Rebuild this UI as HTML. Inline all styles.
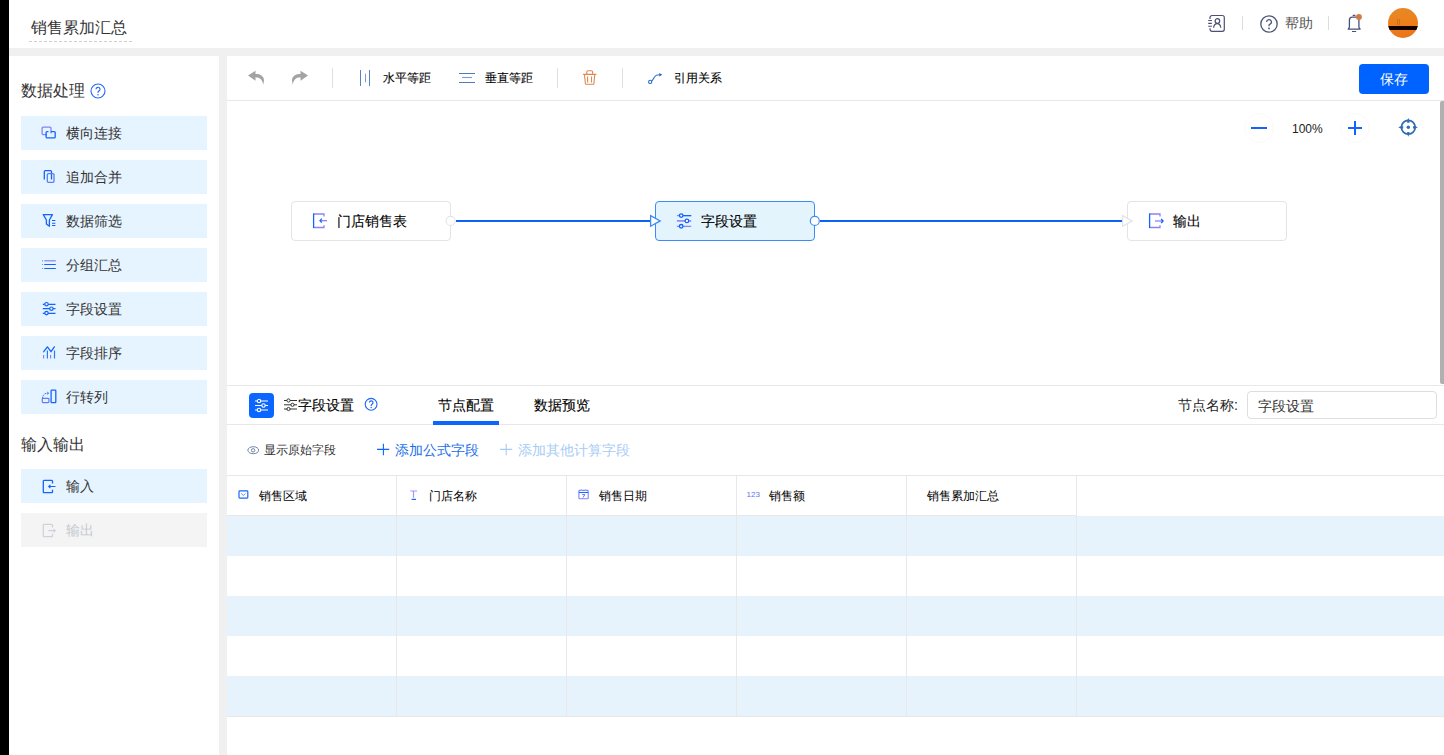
<!DOCTYPE html>
<html><head><meta charset="utf-8">
<style>
*{box-sizing:border-box;margin:0;padding:0}
html,body{width:1444px;height:755px;overflow:hidden;background:#f0f0f0;font-family:"Liberation Sans",sans-serif;color:#333}
.a{position:absolute}
.t{position:absolute;white-space:nowrap;line-height:1}
svg{position:absolute;overflow:visible}
</style></head><body>
<!-- black strip -->
<div class="a" style="left:0;top:0;width:9px;height:755px;background:#000"></div>
<!-- header -->
<div class="a" style="left:9px;top:0;width:1435px;height:48px;background:#fff"></div>
<div class="t" style="left:31px;top:20px;font-size:16px;color:#333">销售累加汇总</div>
<div class="a" style="left:29px;top:41px;width:104px;height:1px;background:repeating-linear-gradient(90deg,#d0d0d0 0 3px,transparent 3px 5px)"></div>

<!-- sidebar -->
<div class="a" style="left:9px;top:56px;width:210px;height:699px;background:#fff"></div>
<!-- main panel -->
<div class="a" style="left:227px;top:56px;width:1217px;height:699px;background:#fff"></div>


<!-- sidebar content -->
<div class="t" style="left:21px;top:83px;font-size:16px;color:#333">数据处理</div>
<svg style="left:90px;top:83px" width="16" height="16" viewBox="0 0 16 16"><circle cx="8" cy="8" r="7" fill="none" stroke="#2a66f8" stroke-width="1.1"/><path d="M6 6.3a2 2 0 1 1 2.8 1.8c-.6.3-.8.6-.8 1.3v.4" fill="none" stroke="#2a66f8" stroke-width="1.2"/><circle cx="8" cy="11.7" r=".75" fill="#2a66f8"/></svg>
<div class="a" style="left:21px;top:116px;width:186px;height:34px;background:#e6f4ff"></div>
<svg style="left:38px;top:124px" width="22" height="20" viewBox="0 0 22 20"><path d="M9 10.6H5.1a1 1 0 0 1-1-1V4.2a1 1 0 0 1 1-1h6.9a1 1 0 0 1 1 1V9.6" fill="none" stroke="#7f86f5" stroke-width="1.3"/><path d="M10.5 7.6H9.1a1 1 0 0 0-1 1V12.9a1 1 0 0 0 1 1H16.2a1 1 0 0 0 1-1V8.6a1 1 0 0 0-1-1H12.8" fill="none" stroke="#1463ff" stroke-width="1.3"/></svg>
<div class="t" style="left:66px;top:126px;font-size:14px;color:#333">横向连接</div>
<div class="a" style="left:21px;top:160px;width:186px;height:34px;background:#e6f4ff"></div>
<svg style="left:38px;top:168px" width="22" height="20" viewBox="0 0 22 20"><path d="M6.3 11.6V3.7a1 1 0 0 1 1-1H12.5a1 1 0 0 1 1 1V11.6" fill="none" stroke="#1463ff" stroke-width="1.3"/><rect x="9.3" y="5.6" width="6.7" height="8.7" rx="1" fill="none" stroke="#5f7cf5" stroke-width="1.3"/></svg>
<div class="t" style="left:66px;top:170px;font-size:14px;color:#333">追加合并</div>
<div class="a" style="left:21px;top:204px;width:186px;height:34px;background:#e6f4ff"></div>
<svg style="left:38px;top:212px" width="22" height="20" viewBox="0 0 22 20"><path d="M5.3 2.6H14.4L11.4 8V14.3L8.4 12.1V8Z" fill="none" stroke="#1463ff" stroke-width="1.3" stroke-linejoin="round"/><path d="M14 8.5h3.4M14 11.2h3.4M14 13.5h3.4" stroke="#1463ff" stroke-width="1.1"/></svg>
<div class="t" style="left:66px;top:214px;font-size:14px;color:#333">数据筛选</div>
<div class="a" style="left:21px;top:248px;width:186px;height:34px;background:#e6f4ff"></div>
<svg style="left:38px;top:256px" width="22" height="20" viewBox="0 0 22 20"><path d="M4 4.8h1M4 8.5h1M4 12.5h1" stroke="#7f86f5" stroke-width="1.2"/><path d="M6.2 4.8H17.8" stroke="#7f86f5" stroke-width="1.2"/><path d="M6.2 8.5H17.8M6.2 12.5H17.8" stroke="#1463ff" stroke-width="1.2"/></svg>
<div class="t" style="left:66px;top:258px;font-size:14px;color:#333">分组汇总</div>
<div class="a" style="left:21px;top:292px;width:186px;height:34px;background:#e6f4ff"></div>
<svg style="left:38px;top:300px" width="22" height="20" viewBox="0 0 22 20"><path d="M4.8 4.3H17.5M4.8 8.6H17.5M4.8 13.3H17.5" stroke="#1463ff" stroke-width="1.2"/><circle cx="8.5" cy="4.2" r="1.7" fill="#e6f4ff" stroke="#1463ff" stroke-width="1.2"/><circle cx="13.4" cy="8.7" r="1.7" fill="#e6f4ff" stroke="#1463ff" stroke-width="1.2"/><circle cx="8.5" cy="13.1" r="1.7" fill="#e6f4ff" stroke="#1463ff" stroke-width="1.2"/></svg>
<div class="t" style="left:66px;top:302px;font-size:14px;color:#333">字段设置</div>
<div class="a" style="left:21px;top:336px;width:186px;height:34px;background:#e6f4ff"></div>
<svg style="left:38px;top:344px" width="22" height="20" viewBox="0 0 22 20"><path d="M5.7 7.7L9.4 2.9 13 7.7 16.4 2.9" fill="none" stroke="#1463ff" stroke-width="1.3" stroke-linecap="round" stroke-linejoin="round"/><path d="M9.4 6.4V14.6M16.5 6.4V14.6" stroke="#2a7af8" stroke-width="1.2"/><path d="M5.6 10.9V14.6M12.6 10.9V14.6" stroke="#7f86f5" stroke-width="1.2"/></svg>
<div class="t" style="left:66px;top:346px;font-size:14px;color:#333">字段排序</div>
<div class="a" style="left:21px;top:380px;width:186px;height:34px;background:#e6f4ff"></div>
<svg style="left:38px;top:388px" width="22" height="20" viewBox="0 0 22 20"><rect x="4.3" y="10.3" width="6.6" height="4.3" rx="0.8" fill="none" stroke="#5f7cf5" stroke-width="1.2"/><path d="M4.6 10.3C4.6 7 6.5 5.2 9.8 5.2" fill="none" stroke="#3a70f5" stroke-width="1" stroke-dasharray="1.2 .6"/><path d="M9.2 4l1.6 1.2-1.6 1.2" fill="none" stroke="#3a70f5" stroke-width=".9"/><rect x="13.1" y="2.2" width="4.7" height="12.4" rx="0.6" fill="none" stroke="#1463ff" stroke-width="1.3"/></svg>
<div class="t" style="left:66px;top:390px;font-size:14px;color:#333">行转列</div>
<div class="t" style="left:21px;top:437px;font-size:16px;color:#333">输入输出</div>
<div class="a" style="left:21px;top:469px;width:186px;height:34px;background:#e6f4ff"></div>
<svg style="left:38px;top:477px" width="22" height="20" viewBox="0 0 22 20"><path d="M14.5 6.5V4.1a.7.7 0 0 0-.7-.7H6a.7.7 0 0 0-.7.7V14.9a.7.7 0 0 0 .7.7h7.8a.7.7 0 0 0 .7-.7V12.8" fill="none" stroke="#1463ff" stroke-width="1.3"/><path d="M17.5 9.5H10.8M12.4 7.9L10.8 9.5 12.4 11.1" fill="none" stroke="#1463ff" stroke-width="1.2"/></svg>
<div class="t" style="left:66px;top:479px;font-size:14px;color:#333">输入</div>
<div class="a" style="left:21px;top:513px;width:186px;height:34px;background:#f4f4f4"></div>
<svg style="left:38px;top:521px" width="22" height="20" viewBox="0 0 22 20"><path d="M14.5 6.5V4.1a.7.7 0 0 0-.7-.7H6a.7.7 0 0 0-.7.7V14.9a.7.7 0 0 0 .7.7h7.8a.7.7 0 0 0 .7-.7V12.8" fill="none" stroke="#cdd2dc" stroke-width="1.3"/><path d="M10.3 9.7H17M15.6 8.1L17.2 9.7 15.6 11.3" fill="none" stroke="#cdd2dc" stroke-width="1.2"/></svg>
<div class="t" style="left:66px;top:523px;font-size:14px;color:#c5c9d0">输出</div>

<!-- header right -->
<svg style="left:1208px;top:15px" width="18" height="18" viewBox="0 0 18 18"><path d="M2 4.1V2.5a2 2 0 0 1 2-2H14.3a2 2 0 0 1 2 2V14.3a2 2 0 0 1-2 2H4a2 2 0 0 1-2-2V13.2" fill="none" stroke="#4a5076" stroke-width="1.2"/><path d="M0.2 5.5H3.9M0.2 8.4H3.9M0.2 11.2H3.9" stroke="#4a5076" stroke-width="1.1"/><circle cx="9.4" cy="6" r="2.3" fill="none" stroke="#4a5076" stroke-width="1.2"/><path d="M5.6 12.8C5.9 10.2 7.4 8.7 9.2 8.7S12.5 10.2 12.8 12.8" fill="none" stroke="#4a5076" stroke-width="1.2"/></svg>
<div class="a" style="left:1242px;top:16px;width:1px;height:14px;background:#ddd"></div>
<svg style="left:1260px;top:15px" width="18" height="18" viewBox="0 0 18 18"><circle cx="9" cy="9" r="8.2" fill="none" stroke="#4a5578" stroke-width="1.3"/><path d="M6.6 7a2.4 2.4 0 1 1 3.4 2.2c-.7.3-1 .7-1 1.5v.6" fill="none" stroke="#4a5578" stroke-width="1.3"/><circle cx="9" cy="13.4" r=".9" fill="#4a5578"/></svg>
<div class="t" style="left:1285px;top:16px;font-size:14px;color:#555">帮助</div>
<div class="a" style="left:1328px;top:16px;width:1px;height:14px;background:#ddd"></div>
<svg style="left:1346px;top:13px" width="18" height="20" viewBox="0 0 18 20"><path d="M1.7 16.1H14.6M2 16.1C3.2 15.4 3.4 14.8 3.4 13.8V7.2a3 3 0 0 1 3-3H9.9a3 3 0 0 1 3 3V13.8c0 1 .2 1.6 1.4 2.3" fill="none" stroke="#48507a" stroke-width="1.3"/><path d="M6.7 2.3H9.4M6 18.5H10.1" stroke="#48507a" stroke-width="1.2"/><circle cx="12.9" cy="3.9" r="3" fill="#d17c47"/></svg>
<div class="a" style="left:1388px;top:8px;width:30px;height:30px;border-radius:50%;overflow:hidden;background:linear-gradient(170deg,#e58a2a 0%,#ee7f1a 50%,#e8741a 100%)">
 <div class="a" style="left:0;top:17.5px;width:30px;height:4.5px;background:#120000"></div><div class="a" style="left:8.5px;top:11px;width:1px;height:6px;background:#c9711e"></div><div class="a" style="left:10.5px;top:11px;width:1px;height:6px;background:#c9711e"></div>
</div>

<!-- toolbar -->
<div class="a" style="left:227px;top:100px;width:1217px;height:1px;background:#e8e8e8"></div>
<svg style="left:248px;top:70px" width="16" height="16" viewBox="0 0 16 16"><path d="M0 5.4L7.5 0.7V4C12 4 16 5.8 16 10.5L15.3 14.8C14.6 10.3 12.3 7.3 7.5 7.3V10.8Z" fill="#a3a3a3"/></svg>
<svg style="left:292px;top:70px" width="16" height="16" viewBox="0 0 16 16"><path d="M16 5.4L8.5 0.7V4C4 4 0 5.8 0 10.5L0.7 14.8C1.4 10.3 3.7 7.3 8.5 7.3V10.8Z" fill="#a3a3a3"/></svg>
<div class="a" style="left:332px;top:68px;width:1px;height:20px;background:#e0e0e0"></div>
<svg style="left:359px;top:70px" width="12" height="16" viewBox="0 0 12 16"><path d="M1.5 0v16M10.5 0v16" stroke="#5a82bd" stroke-width="1"/><path d="M6.5 3.7v8.7" stroke="#7d9ccc" stroke-width="1"/></svg>
<div class="t" style="left:383px;top:72px;font-size:12px;color:#000;-webkit-text-stroke:0.1px #000">水平等距</div>
<svg style="left:459px;top:72px" width="16" height="12" viewBox="0 0 16 12"><path d="M0 1.5h16M0 10.5h16" stroke="#4d7bb8" stroke-width="1"/><path d="M3 5.5h10" stroke="#7f9dcc" stroke-width="1.1"/></svg>
<div class="t" style="left:485px;top:72px;font-size:12px;color:#000;-webkit-text-stroke:0.1px #000">垂直等距</div>
<div class="a" style="left:557px;top:68px;width:1px;height:20px;background:#e0e0e0"></div>
<svg style="left:578px;top:66px" width="24" height="24" viewBox="0 0 24 24"><path d="M5.1 8.4H18.4M8.8 8.4V6a1.2 1.2 0 0 1 1.2-1.2h3.4a1.2 1.2 0 0 1 1.2 1.2V8.4M6.4 8.4L7.5 18.3H15.8L16.8 8.4M9.6 10.5V16.5M13.5 10.5V16.5" fill="none" stroke="#e0894f" stroke-width="1.1" stroke-linejoin="round"/></svg>
<div class="a" style="left:622px;top:68px;width:1px;height:20px;background:#e0e0e0"></div>
<svg style="left:643px;top:66px" width="24" height="24" viewBox="0 0 24 24"><circle cx="7.2" cy="15.9" r="1.6" fill="none" stroke="#2c6cc0" stroke-width="1.1"/><path d="M8.6 15.2C10.3 13.6 11.3 10.4 13.3 9.3 14.3 8.7 15.5 8.7 16.8 8.7" fill="none" stroke="#3a7ac8" stroke-width="1.1"/><path d="M16.2 6.9L19.4 8.7 16.2 10.5Z" fill="#2c6cc0"/></svg>
<div class="t" style="left:674px;top:72px;font-size:12px;color:#000;-webkit-text-stroke:0.1px #000">引用关系</div>
<div class="a" style="left:1359px;top:64px;width:70px;height:30px;border-radius:4px;background:#0062ff"></div>
<div class="t" style="left:1380px;top:72px;font-size:14px;color:#fff">保存</div>
<!-- scrollbar -->
<div class="a" style="left:1440px;top:101px;width:4px;height:283px;background:#b0b0b0;border-radius:2px 0 0 2px"></div>
<!-- zoom controls -->
<div class="a" style="left:1244px;top:113px;width:30px;height:30px;border-radius:50%;border:1px solid #f9f9f9"></div>
<div class="a" style="left:1251px;top:127px;width:16px;height:2px;background:#1463ff"></div>
<div class="t" style="left:1292px;top:123px;font-size:12px;color:#222">100%</div>
<div class="a" style="left:1340px;top:113px;width:30px;height:30px;border-radius:50%;border:1px solid #f9f9f9"></div>
<div class="a" style="left:1348px;top:127px;width:14px;height:1.6px;background:#1463ff"></div>
<div class="a" style="left:1354.2px;top:121px;width:1.6px;height:14px;background:#1463ff"></div>
<svg style="left:1396px;top:116px" width="24" height="24" viewBox="0 0 24 24"><circle cx="12.3" cy="11.3" r="6.9" fill="none" stroke="#2f6db5" stroke-width="1.8"/><circle cx="12.3" cy="11.3" r="1.7" fill="#2f6db5"/><path d="M12.3 1.9L13.4 4.6V6.7H11.2V4.6ZM12.3 20.7L13.4 18V16H11.2V18ZM2.2 11.3L4.9 10.2H7.2V12.4H4.9ZM21.9 11.3L19.2 10.2H17V12.4H19.2Z" fill="#2f6db5"/></svg>

<!-- canvas edges -->
<div class="a" style="left:456px;top:220px;width:195px;height:2px;background:#0d62f0"></div>
<div class="a" style="left:820px;top:220px;width:302px;height:2px;background:#0d62f0"></div>
<!-- node 1 -->
<div class="a" style="left:291px;top:201px;width:160px;height:40px;border:1px solid #e4e4e4;border-radius:4px;background:#fff"></div>
<svg style="left:308px;top:208px" width="24" height="24" viewBox="0 0 24 24"><path d="M16 8.6V6H5.6M5.6 19.5H16V17.2" fill="none" stroke="#8c84f5" stroke-width="1.3"/><path d="M5.6 5.4V20" stroke="#1463ff" stroke-width="1.3"/><path d="M12.6 12.7H19.1" stroke="#8c84f5" stroke-width="1.3"/><path d="M13.8 10.6L12 12.7 13.8 14.6" fill="none" stroke="#1463ff" stroke-width="1.3"/></svg>
<div class="t" style="left:337px;top:214px;font-size:14px;color:#000;-webkit-text-stroke:0.1px #000">门店销售表</div>
<svg style="left:440px;top:208px" width="24" height="24" viewBox="0 0 24 24"><circle cx="10.6" cy="12.9" r="4.5" fill="#fff" stroke="#e4e4e4" stroke-width="1.1"/></svg>
<!-- node 2 -->
<div class="a" style="left:655px;top:201px;width:160px;height:40px;border:1px solid #3d8cf5;border-radius:4px;background:#e3f4fd"></div>
<svg style="left:640px;top:208px" width="24" height="24" viewBox="0 0 24 24"><path d="M10.6 7.6L20.2 12.9 10.6 18.2z" fill="#fff" stroke="#3d8cf5" stroke-width="1.3"/></svg>
<svg style="left:672px;top:208px" width="24" height="24" viewBox="0 0 24 24"><path d="M4.9 7.6H19.2M4.9 18.3H19.2" stroke="#8c84f5" stroke-width="1.2"/><path d="M10.9 7.6H19.2" stroke="#1463ff" stroke-width="1.2"/><path d="M4.9 12.9H19.2" stroke="#8c84f5" stroke-width="1.6"/><circle cx="9.2" cy="7.6" r="1.8" fill="#e3f4fd" stroke="#1463ff" stroke-width="1.3"/><circle cx="14.9" cy="12.9" r="1.8" fill="#fff" stroke="#1463ff" stroke-width="1.3"/><circle cx="9.2" cy="18.3" r="1.8" fill="#e3f4fd" stroke="#1463ff" stroke-width="1.3"/></svg>
<div class="t" style="left:701px;top:214px;font-size:14px;color:#000;-webkit-text-stroke:0.1px #000">字段设置</div>
<svg style="left:804px;top:208px" width="24" height="24" viewBox="0 0 24 24"><circle cx="10.8" cy="12.9" r="4.5" fill="#fff" stroke="#3d8cf5" stroke-width="1.2"/></svg>
<!-- node 3 -->
<div class="a" style="left:1127px;top:201px;width:160px;height:40px;border:1px solid #e4e4e4;border-radius:4px;background:#fff"></div>
<svg style="left:1112px;top:208px" width="24" height="24" viewBox="0 0 24 24"><path d="M10.6 7.6L20.2 12.9 10.6 18.2z" fill="#fff" stroke="#e4e4e4" stroke-width="1.2"/></svg>
<svg style="left:1144px;top:208px" width="24" height="24" viewBox="0 0 24 24"><path d="M16 8.6V6H5.6M5.6 19.5H16V17.2" fill="none" stroke="#8c84f5" stroke-width="1.3"/><path d="M5.6 5.4V20" stroke="#1463ff" stroke-width="1.3"/><path d="M11 13H18.6" stroke="#8c84f5" stroke-width="1.3"/><path d="M17.2 11L19 13 17.2 15" fill="none" stroke="#1463ff" stroke-width="1.4"/></svg>
<div class="t" style="left:1173px;top:214px;font-size:14px;color:#000;-webkit-text-stroke:0.1px #000">输出</div>

<!-- bottom panel -->
<div class="a" style="left:227px;top:385px;width:1217px;height:1px;background:#e8e8e8"></div>
<div class="a" style="left:227px;top:424px;width:1217px;height:1px;background:#e8e8e8"></div>
<div class="a" style="left:249px;top:393px;width:25px;height:25px;border-radius:4px;background:#0a66ff"></div>
<svg style="left:254px;top:398px" width="15" height="15" viewBox="0 0 15 15"><path d="M1 3h13M1 7.5h13M1 12h13" stroke="#fff" stroke-width="1.2"/><circle cx="5" cy="3" r="1.7" fill="#0a66ff" stroke="#fff" stroke-width="1.1"/><circle cx="9.5" cy="7.5" r="1.7" fill="#0a66ff" stroke="#fff" stroke-width="1.1"/><circle cx="5" cy="12" r="1.7" fill="#0a66ff" stroke="#fff" stroke-width="1.1"/></svg>
<svg style="left:284px;top:398px" width="14" height="14" viewBox="0 0 14 14"><path d="M0 2.5h13M0 6.8h13M0 11h13" stroke="#333" stroke-width="1"/><circle cx="4.5" cy="2.5" r="1.6" fill="#fff" stroke="#333"/><circle cx="8.5" cy="6.8" r="1.6" fill="#fff" stroke="#333"/><circle cx="4.5" cy="11" r="1.6" fill="#fff" stroke="#333"/></svg>
<div class="t" style="left:298px;top:398px;font-size:14px;color:#000;-webkit-text-stroke:0.1px #000">字段设置</div>
<svg style="left:358px;top:394px" width="24" height="22" viewBox="0 0 24 22"><circle cx="13.1" cy="10.3" r="5.9" fill="none" stroke="#1f66ff" stroke-width="1.1"/><path d="M11.4 8.6a1.8 1.8 0 1 1 2.6 1.6c-.5.3-.8.6-.8 1.2v.5" fill="none" stroke="#1f66ff" stroke-width="1.2"/><circle cx="13.2" cy="13.6" r=".75" fill="#1f66ff"/></svg>
<div class="t" style="left:438px;top:398px;font-size:14px;color:#000;-webkit-text-stroke:0.1px #000">节点配置</div>
<div class="a" style="left:433px;top:421px;width:66px;height:4px;background:#0a66ff"></div>
<div class="t" style="left:534px;top:398px;font-size:14px;color:#000;-webkit-text-stroke:0.1px #000">数据预览</div>
<div class="t" style="left:1178px;top:398px;font-size:14px;color:#222">节点名称:</div>
<div class="a" style="left:1247px;top:391px;width:190px;height:28px;border:1px solid #dedede;border-radius:4px;background:#fff"></div>
<div class="t" style="left:1258px;top:399px;font-size:14px;color:#333">字段设置</div>
<!-- actions -->
<svg style="left:244px;top:440px" width="20" height="20" viewBox="0 0 20 20"><ellipse cx="9.25" cy="10.2" rx="5.4" ry="3.5" fill="none" stroke="#6f86a0" stroke-width="1"/><circle cx="9.1" cy="10.3" r="1.7" fill="none" stroke="#6f86a0" stroke-width="1"/></svg>
<div class="t" style="left:264px;top:444px;font-size:12px;color:#333">显示原始字段</div>
<svg style="left:372px;top:440px" width="24" height="20" viewBox="0 0 24 20"><path d="M5 9.4H17.2M11.4 3.8V15.2" stroke="#0a64ff" stroke-width="1.1"/></svg>
<div class="t" style="left:395px;top:443px;font-size:14px;color:#1d6fe8">添加公式字段</div>
<svg style="left:495px;top:440px" width="24" height="20" viewBox="0 0 24 20"><path d="M5 9.4H17.2M11.2 3.8V15.2" stroke="#a8ccf5" stroke-width="1.1"/></svg>
<div class="t" style="left:518px;top:443px;font-size:14px;color:#a8ccf5">添加其他计算字段</div>
<!-- table -->
<div class="a" style="left:227px;top:475px;width:1217px;height:1px;background:#e8e8e8"></div>
<div class="a" style="left:227px;top:515px;width:850px;height:1px;background:#e8e8e8"></div>
<div class="a" style="left:227px;top:516px;width:1217px;height:40px;background:#e6f3fd"></div>
<div class="a" style="left:227px;top:596px;width:1217px;height:40px;background:#e6f3fd"></div>
<div class="a" style="left:227px;top:676px;width:1217px;height:40px;background:#e6f3fd"></div>
<div class="a" style="left:227px;top:716px;width:1217px;height:1px;background:#e8e8e8"></div>
<div class="a" style="left:396px;top:476px;width:1px;height:240px;background:#e8e8e8"></div>
<div class="a" style="left:566px;top:476px;width:1px;height:240px;background:#e8e8e8"></div>
<div class="a" style="left:736px;top:476px;width:1px;height:240px;background:#e8e8e8"></div>
<div class="a" style="left:906px;top:476px;width:1px;height:240px;background:#e8e8e8"></div>
<div class="a" style="left:1076px;top:476px;width:1px;height:240px;background:#e8e8e8"></div>

<svg style="left:232px;top:484px" width="24" height="22" viewBox="0 0 24 22"><rect x="7" y="6.9" width="8.8" height="7.2" rx=".8" fill="none" stroke="#1a66ff" stroke-width="1.2"/><path d="M9.1 9.4L11.4 11.5 13.5 9.4" fill="none" stroke="#5a7af8" stroke-width=".9"/></svg>
<div class="t" style="left:259px;top:490px;font-size:12px;color:#000;-webkit-text-stroke:0px #000">销售区域</div>
<svg style="left:402px;top:484px" width="24" height="22" viewBox="0 0 24 22"><path d="M8.2 7H15.1M11.5 7V13.7" stroke="#a393ff" stroke-width="1.2"/><path d="M9.6 15.4H14" stroke="#1a66ff" stroke-width="1.2"/></svg>
<div class="t" style="left:429px;top:490px;font-size:12px;color:#000;-webkit-text-stroke:0px #000">门店名称</div>
<svg style="left:572px;top:484px" width="24" height="22" viewBox="0 0 24 22"><rect x="6.9" y="6.4" width="9.3" height="8.4" rx=".8" fill="none" stroke="#7c84ff" stroke-width="1.1"/><path d="M6.9 8.5H16.2" stroke="#1a66ff" stroke-width="1.1"/><path d="M9.5 5V7M13.5 5V7" stroke="#9ac0ff" stroke-width=".9"/><path d="M10.2 10.6H12.9L11 13.6" fill="none" stroke="#7a6cf0" stroke-width="1"/></svg>
<div class="t" style="left:599px;top:490px;font-size:12px;color:#000;-webkit-text-stroke:0px #000">销售日期</div>
<div class="t" style="left:746.5px;top:490.5px;font-size:8px;color:#5c70fa">123</div>
<div class="t" style="left:769px;top:490px;font-size:12px;color:#000;-webkit-text-stroke:0px #000">销售额</div>
<div class="t" style="left:927px;top:490px;font-size:12px;color:#000;-webkit-text-stroke:0px #000">销售累加汇总</div>
</body></html>
